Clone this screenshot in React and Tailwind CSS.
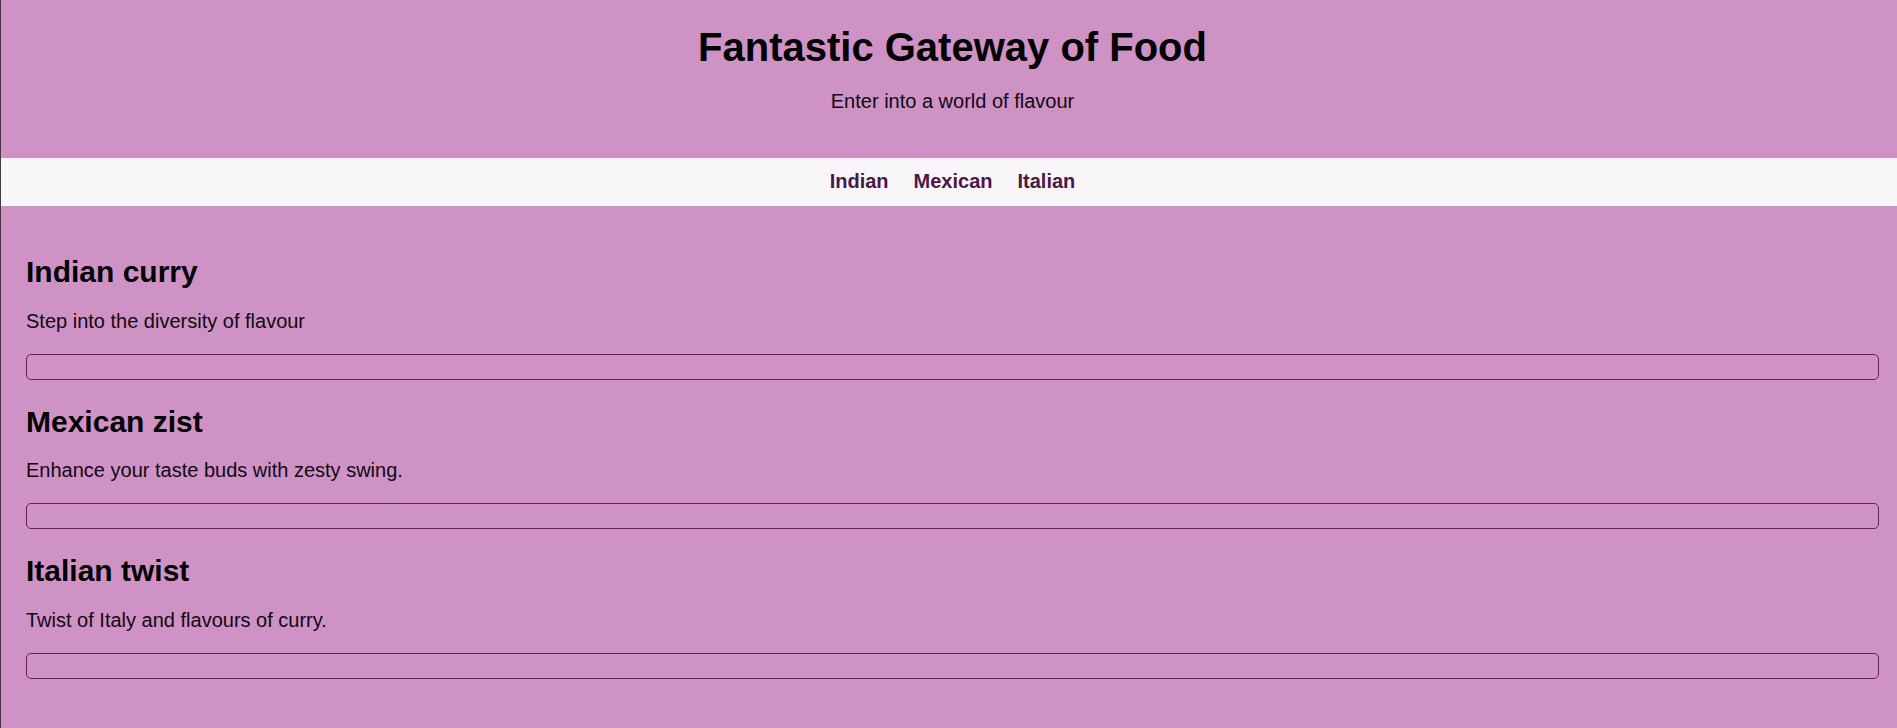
import React from "react";

const sections = [
  { title: "Indian curry", text: "Step into the diversity of flavour" },
  { title: "Mexican zist", text: "Enhance your taste buds with zesty swing." },
  { title: "Italian twist", text: "Twist of Italy and flavours of curry." },
];

export default function App() {
  return (
    <div
      className="w-full min-h-screen overflow-hidden bg-[#cf92c5]"
      style={{ fontFamily: '"Liberation Sans", Arial, sans-serif' }}
    >
      <div className="w-[1904px] min-h-screen border-l border-[#3f3f3f] bg-[#cf92c5]">
        <header className="pt-[24px] pb-[45px] text-center">
          <h1 className="text-[40px] leading-[46px] font-bold text-black mb-[20px]">
            Fantastic Gateway of Food
          </h1>
          <p className="text-[20px] leading-[23px] text-[#120812]">
            Enter into a world of flavour
          </p>
        </header>
        <nav className="bg-[#f9f6f9] pt-[12px] pb-[13px] flex justify-center gap-[25px]">
          <a className="text-[20px] leading-[23px] font-bold text-[#4a1845]">Indian</a>
          <a className="text-[20px] leading-[23px] font-bold text-[#4a1845]">Mexican</a>
          <a className="text-[20px] leading-[23px] font-bold text-[#4a1845]">Italian</a>
        </nav>
        <main className="pt-[24px] px-[25px] pb-[40px]">
          {sections.map((s) => (
            <section key={s.title}>
              <h2 className="mt-[25px] mb-[20px] text-[30px] leading-[34.5px] font-bold text-black">
                {s.title}
              </h2>
              <p className="mb-[21px] text-[20px] leading-[23px] text-[#120812]">{s.text}</p>
              <div className="h-[26px] w-full rounded-[5px] border border-[#6b1d5c]"></div>
            </section>
          ))}
        </main>
      </div>
    </div>
  );
}
